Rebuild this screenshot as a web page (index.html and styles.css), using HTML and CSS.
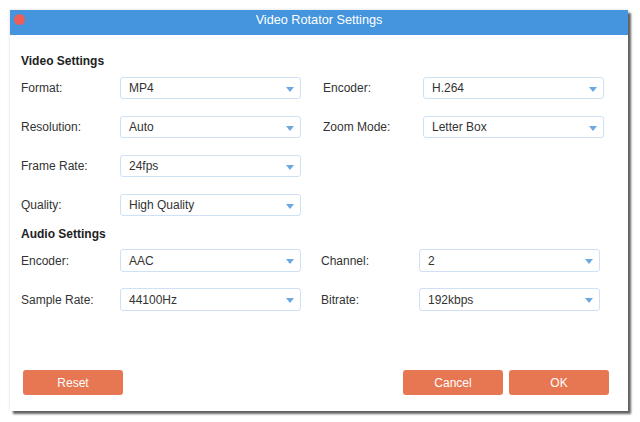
FILE: index.html
```html
<!DOCTYPE html>
<html>
<head>
<meta charset="utf-8">
<link rel="stylesheet" href="styles.css">
</head>
<body>
<div class="window">
  <div class="titlebar">
    <span class="close"></span>
    <span class="title">Video Rotator Settings</span>
  </div>
  <div class="content">
    <div class="heading">Video Settings</div>
    <div class="rows video">
      <div class="row">
        <div class="field"><span class="label">Format:</span><div class="select">MP4<i class="arrow"></i></div></div>
        <div class="field second"><span class="label">Encoder:</span><div class="select">H.264<i class="arrow"></i></div></div>
      </div>
      <div class="row">
        <div class="field"><span class="label">Resolution:</span><div class="select">Auto<i class="arrow"></i></div></div>
        <div class="field second"><span class="label">Zoom Mode:</span><div class="select">Letter Box<i class="arrow"></i></div></div>
      </div>
      <div class="row">
        <div class="field"><span class="label">Frame Rate:</span><div class="select">24fps<i class="arrow"></i></div></div>
      </div>
      <div class="row">
        <div class="field"><span class="label">Quality:</span><div class="select">High Quality<i class="arrow"></i></div></div>
      </div>
    </div>
    <div class="heading audio-heading">Audio Settings</div>
    <div class="rows audio">
      <div class="row">
        <div class="field"><span class="label">Encoder:</span><div class="select">AAC<i class="arrow"></i></div></div>
        <div class="field second"><span class="label">Channel:</span><div class="select">2<i class="arrow"></i></div></div>
      </div>
      <div class="row">
        <div class="field"><span class="label">Sample Rate:</span><div class="select">44100Hz<i class="arrow"></i></div></div>
        <div class="field second"><span class="label">Bitrate:</span><div class="select">192kbps<i class="arrow"></i></div></div>
      </div>
    </div>
  </div>
  <div class="footer">
    <button class="btn">Reset</button>
    <div class="right-btns">
      <button class="btn">Cancel</button>
      <button class="btn">OK</button>
    </div>
  </div>
</div>
</body>
</html>
```
FILE: styles.css
```css
* { box-sizing: border-box; }
html, body { margin: 0; padding: 0; background: #fff; }
body {
  font-family: "Liberation Sans", Arial, sans-serif;
  font-size: 12px;
  color: #333;
  padding: 10px 0 0 10px;
  height: 422px;
  overflow: hidden;
}
.window {
  width: 618px;
  height: 401px;
  background: #fff;
  display: flex;
  flex-direction: column;
  box-shadow: 3px 3px 2px rgba(0,0,0,0.6), 0 0 3px rgba(0,0,0,0.15);
}
.titlebar {
  height: 25px;
  background: #4495dd;
  display: flex;
  align-items: center;
  padding: 0 0 6px 4px;
}
.close {
  width: 11px;
  height: 11px;
  border-radius: 50%;
  background: #ec5f58;
  flex: none;
}
.title {
  flex: 1;
  text-align: center;
  color: #fff;
  font-size: 12.7px;
  margin-right: 15px;
}
.content {
  flex: 1;
  padding: 19px 0 0 11px;
}
.heading {
  font-weight: bold;
  line-height: 14px;
  color: #222;
}
.audio-heading { margin-top: 11px; }
.rows {
  display: flex;
  flex-direction: column;
  gap: 17px;
  margin-top: 9px;
}
.rows.audio { margin-top: 8px; gap: 16px; }
.row {
  display: flex;
}
.field {
  display: flex;
  align-items: center;
}
.label {
  width: 99px;
  flex: none;
}
.video .second { margin-left: 22px; }
.video .second .label { width: 100px; }
.audio .second { margin-left: 20px; }
.audio .second .label { width: 98px; }
.select {
  width: 181px;
  height: 22px;
  border: 1px solid #cfe1f4;
  border-radius: 3px;
  padding-left: 8px;
  display: flex;
  align-items: center;
  position: relative;
  color: #333;
}
.rows.audio .select { height: 23px; }
.arrow {
  position: absolute;
  right: 6px;
  top: 9px;
  width: 0;
  height: 0;
  border-left: 4.5px solid transparent;
  border-right: 4.5px solid transparent;
  border-top: 5px solid #6ea8e0;
}
.footer {
  display: flex;
  justify-content: space-between;
  padding: 0 19px 16px 13px;
}
.right-btns {
  display: flex;
  gap: 6px;
}
.btn {
  width: 100px;
  height: 25px;
  border: none;
  border-radius: 3px;
  background: #e77752;
  color: #fff;
  font-family: "Liberation Sans", Arial, sans-serif;
  font-size: 12px;
  padding: 0;
}
```
